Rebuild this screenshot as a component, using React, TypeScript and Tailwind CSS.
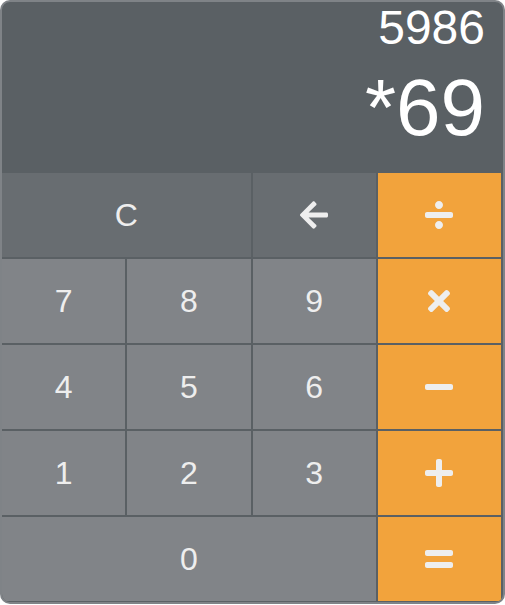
import { FaArrowLeft, FaDivide, FaTimes, FaMinus, FaPlus, FaEquals } from 'react-icons/fa';
import type { ReactNode } from 'react';

type Key = { label: ReactNode; kind: 'fn' | 'num' | 'op'; span?: string };

const keys: Key[] = [
  { label: 'C', kind: 'fn', span: 'col-span-2' },
  { label: <FaArrowLeft size={32} />, kind: 'fn' },
  { label: <FaDivide size={32} />, kind: 'op' },
  { label: '7', kind: 'num' },
  { label: '8', kind: 'num' },
  { label: '9', kind: 'num' },
  { label: <FaTimes size={32} />, kind: 'op' },
  { label: '4', kind: 'num' },
  { label: '5', kind: 'num' },
  { label: '6', kind: 'num' },
  { label: <FaMinus size={32} />, kind: 'op' },
  { label: '1', kind: 'num' },
  { label: '2', kind: 'num' },
  { label: '3', kind: 'num' },
  { label: <FaPlus size={32} />, kind: 'op' },
  { label: '0', kind: 'num', span: 'col-span-3' },
  { label: <FaEquals size={32} />, kind: 'op' },
];

const kindClass = {
  fn: 'bg-[#686d71]',
  num: 'bg-[#818488]',
  op: 'bg-[#f2a33c]',
};

export default function App() {
  return (
    <div className="w-[505px] bg-white font-['Liberation_Sans',Arial,sans-serif]">
      <div className="w-[505px] overflow-hidden rounded-[10px] border-2 border-[#7f8387] bg-[#5a6064]">
        {/* Display */}
        <div className="flex h-[169px] flex-col items-end pr-[18px] pt-[2px] text-white">
          <div className="text-[48px] leading-none">5986</div>
          <div className="mt-[16px] text-[80px] leading-none">*69</div>
        </div>

        {/* Keypad */}
        <div className="mt-[2px] grid grid-cols-4 gap-[2px] pr-[2px] pb-px">
          {keys.map((k, i) => (
            <button
              key={i}
              className={`${kindClass[k.kind]} ${k.span ?? ''} flex h-[84px] items-center justify-center text-[32px] text-[#eeeeee]`}
            >
              {k.label}
            </button>
          ))}
        </div>
      </div>
    </div>
  );
}
